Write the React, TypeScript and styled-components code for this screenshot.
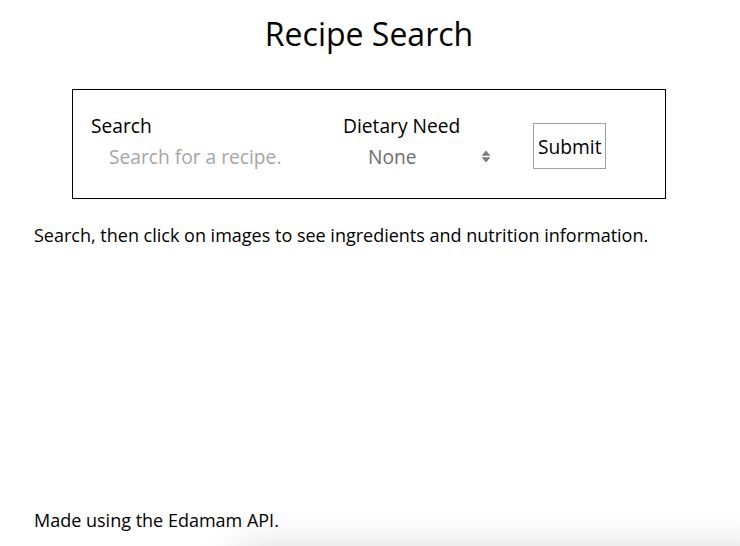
import React from "react";
import styled, { createGlobalStyle } from "styled-components";

const GlobalStyle = createGlobalStyle`
  html, body {
    margin: 0;
    padding: 0;
    background: #fff;
  }
  body {
    font-family: "Open Sans", "DejaVu Sans", sans-serif;
    color: #000;
    overflow: hidden;
  }
`;

const Page = styled.div`
  height: 546px;
  box-sizing: border-box;
  padding-right: 2px;
  display: flex;
  flex-direction: column;
`;

const Title = styled.h1`
  margin: 12px 0 0;
  font-size: 32px;
  font-weight: 400;
  line-height: normal;
  text-align: center;
`;

const FormBox = styled.form`
  box-sizing: border-box;
  width: 594px;
  height: 110px;
  margin: 34px auto 0;
  border: 1px solid #000;
  padding: 0 18px;
  display: flex;
  align-items: center;
`;

const Field = styled.div<{ $width: number }>`
  width: ${(p) => p.$width}px;
  margin-bottom: 4px;
  display: flex;
  flex-direction: column;
`;

const Label = styled.label`
  font-size: 19.2px;
  line-height: 26px;
  color: #000;
`;

const TextInput = styled.input`
  box-sizing: border-box;
  margin-top: 3px;
  width: 220px;
  height: 30px;
  border: none;
  outline: none;
  padding: 0 0 0 18px;
  font-family: inherit;
  font-size: 19.2px;
  background: transparent;
  &::placeholder {
    color: #a6a6a6;
    opacity: 1;
  }
`;

const SelectWrap = styled.div`
  position: relative;
  margin-top: 3px;
  width: 152px;
  height: 30px;
`;

const Select = styled.select`
  appearance: none;
  -webkit-appearance: none;
  box-sizing: border-box;
  width: 100%;
  height: 30px;
  border: none;
  outline: none;
  background: transparent;
  padding: 0 0 0 25px;
  font-family: inherit;
  font-size: 19.2px;
  color: #6e6e6e;
`;

const Arrows = styled.svg`
  position: absolute;
  left: 138px;
  top: 8px;
  pointer-events: none;
`;

const SubmitButton = styled.button`
  box-sizing: border-box;
  height: 46px;
  margin-top: 4px;
  padding: 0 4px;
  border: 1px solid #a0a0a0;
  background: #fff;
  font-family: inherit;
  font-size: 19.2px;
  color: #000;
  border-radius: 0;
`;

const Hint = styled.p`
  margin: 24px 0 0;
  padding-left: 34px;
  font-size: 18px;
  line-height: normal;
`;

const Footer = styled.footer`
  margin-top: auto;
  padding: 0 0 14px 34px;
  font-size: 18px;
  line-height: normal;
`;

const BottomShadow = styled.div`
  position: fixed;
  left: 230px;
  right: -40px;
  top: 546px;
  height: 60px;
  border-radius: 40px;
  box-shadow: 0 0 36px 2px rgba(0, 0, 0, 0.13);
  pointer-events: none;
`;

export default function App() {
  return (
    <>
      <GlobalStyle />
      <Page>
        <Title>Recipe Search</Title>
        <FormBox onSubmit={(e) => e.preventDefault()}>
          <Field $width={252}>
            <Label htmlFor="q">Search</Label>
            <TextInput id="q" placeholder="Search for a recipe." />
          </Field>
          <Field $width={190}>
            <Label htmlFor="diet">Dietary Need</Label>
            <SelectWrap>
              <Select id="diet" defaultValue="none">
                <option value="none">None</option>
                <option value="balanced">Balanced</option>
                <option value="high-protein">High-Protein</option>
                <option value="low-fat">Low-Fat</option>
                <option value="low-carb">Low-Carb</option>
              </Select>
              <Arrows width="10" height="13" viewBox="0 0 10 13">
                <path d="M5 0.5 L9.5 5.8 L0.5 5.8 Z" fill="#7d7d7d" />
                <path d="M5 12.5 L9.5 7.2 L0.5 7.2 Z" fill="#7d7d7d" />
              </Arrows>
            </SelectWrap>
          </Field>
          <SubmitButton type="submit">Submit</SubmitButton>
        </FormBox>
        <Hint>Search, then click on images to see ingredients and nutrition information.</Hint>
        <Footer>Made using the Edamam API.</Footer>
      </Page>
      <BottomShadow />
    </>
  );
}
